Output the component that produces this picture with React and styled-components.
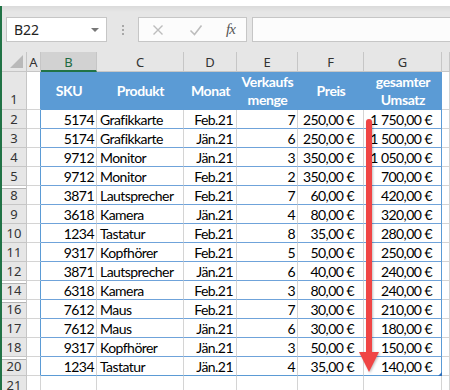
import React from "react"
import styled, { createGlobalStyle } from "styled-components"

const GlobalStyle = createGlobalStyle`
  html, body { margin: 0; padding: 0; background: #fff; }
  body { width: 450px; height: 390px; overflow: hidden; }
`

const Window = styled.div`
  position: relative;
  width: 450px;
  height: 390px;
  overflow: hidden;
  display: flex;
  flex-direction: column;
  background: #fff;
`

const TopGap = styled.div`
  height: 6px;
  flex: none;
  background: #fff;
`

const Frame = styled.div`
  flex: 1;
  min-height: 0;
  display: flex;
  flex-direction: column;
  border-left: 2px solid #217346;
`

const FormulaBar = styled.div`
  height: 46px;
  flex: none;
  box-sizing: border-box;
  padding: 11px 0 0 4px;
  display: flex;
  align-items: flex-start;
  background: linear-gradient(#dadada, #e6e6e6 6px);
`

const NameBox = styled.div`
  width: 101px;
  height: 25px;
  box-sizing: border-box;
  border: 1px solid #c6c6c6;
  background: #fff;
  display: flex;
  align-items: center;
  justify-content: space-between;
  padding: 0 7px 0 7px;
  font: 14px "Noto Sans", sans-serif;
  color: #222;
`

const DropArrow = styled.span`
  width: 0;
  height: 0;
  border-left: 4px solid transparent;
  border-right: 4px solid transparent;
  border-top: 4px solid #777;
`

const Grip = styled.div`
  width: 31px;
  height: 25px;
  display: flex;
  flex-direction: column;
  align-items: center;
  justify-content: center;
  gap: 2px;
  span {
    width: 2px;
    height: 2px;
    background: #a8a8a8;
  }
`

const IconBox = styled.div`
  width: 109px;
  height: 25px;
  box-sizing: border-box;
  border: 1px solid #c6c6c6;
  background: #fcfcfc;
  display: grid;
  grid-template-columns: 38px 38px 1fr;
  align-items: center;
  justify-items: center;
`

const Fx = styled.span`
  font: italic 15px "Liberation Serif", serif;
  color: #555;
  letter-spacing: -1px;
`

const FormulaInput = styled.div`
  flex: 1;
  height: 25px;
  margin-left: 5px;
  box-sizing: border-box;
  border: 1px solid #c6c6c6;
  border-right: none;
  background: #fcfcfc;
`

const Sheet = styled.div`
  flex: 1;
  min-height: 0;
  display: grid;
  grid-template-columns: 25px 14px 56px 87px 53px 61px 66px 78px 1fr;
  grid-template-rows: 20px 38px;
  grid-auto-rows: 19px;
  background: #fff;
  font: 14px "Lato", "Liberation Sans", sans-serif;
  letter-spacing: -0.55px;
  color: #000;
`

const Corner = styled.div`
  position: relative;
  background: #e6e6e6;
  border-right: 1px solid #c6c6c6;
  border-bottom: 1px solid #c6c6c6;
  box-sizing: border-box;
  &::after {
    content: "";
    position: absolute;
    right: 3px;
    bottom: 3px;
    width: 13px;
    height: 13px;
    background: #b9b9b9;
    clip-path: polygon(100% 0, 100% 100%, 0 100%);
  }
`

const ColHead = styled.div`
  box-sizing: border-box;
  display: flex;
  align-items: center;
  justify-content: center;
  background: ${(p) => (p.$active ? "#d2d2d2" : "#e6e6e6")};
  border-right: 1px solid #c6c6c6;
  border-bottom: ${(p) => (p.$active ? "2px solid #217346" : "1px solid #c6c6c6")};
  color: ${(p) => (p.$active ? "#1e6b41" : "#333")};
  font: 13px "Noto Sans", sans-serif;
  letter-spacing: 0;
  padding-top: ${(p) => (p.$active ? "2px" : "0")};
`

const RowHead = styled.div`
  box-sizing: border-box;
  display: flex;
  justify-content: center;
  align-items: ${(p) => (p.$bottom ? "flex-end" : "center")};
  padding-bottom: ${(p) => (p.$bottom ? "1px" : "0")};
  background: #e6e6e6;
  border-right: 1px solid #c6c6c6;
  border-bottom: 1px solid #c6c6c6;
  box-shadow: ${(p) => (p.$gap ? "inset 0 2px 0 #fff, inset 0 3px 0 #b4b4b4" : "none")};
  color: #333;
  font: 13px "Noto Sans", sans-serif;
  letter-spacing: 0;
`

const Cell = styled.div`
  position: relative;
  box-sizing: border-box;
  display: flex;
  align-items: center;
  justify-content: ${(p) => (p.$align === "left" ? "flex-start" : "flex-end")};
  padding: ${(p) => (p.$align === "left" ? "0 0 0 3px" : `0 ${p.$pad || 2}px 0 0`)};
  white-space: nowrap;
  background: #fff;
  border-right: 1px solid ${(p) => (p.$edge ? "#5b9bd5" : "#d4d4d4")};
  border-bottom: 1px solid ${(p) => (p.$band ? "#6fa3da" : "#d4d4d4")};
`

const HeadCell = styled.div`
  box-sizing: border-box;
  display: flex;
  flex-direction: column;
  align-items: center;
  justify-content: center;
  background: #5b9bd5;
  color: #fff;
  font-weight: 700;
  line-height: 18px;
  letter-spacing: -0.4px;
  text-align: center;
  border-bottom: 1px solid #5b9bd5;
`

const Handle = styled.span`
  position: absolute;
  right: -1px;
  bottom: -1px;
  width: 4px;
  height: 4px;
  background: #2e6fba;
  clip-path: polygon(100% 0, 100% 100%, 0 100%);
`

const Arrow = styled.svg`
  position: absolute;
  left: 354px;
  top: 112px;
  filter: drop-shadow(1px 1px 1px rgba(0, 0, 0, 0.25));
`

const columns = ["A", "B", "C", "D", "E", "F", "G", ""]

const headers = [["SKU"], ["Produkt"], ["Monat"], ["Verkaufs", "menge"], ["Preis"], ["gesamter", "Umsatz"]]

const rows = [
  [2, "5174", "Grafikkarte", "Feb.21", "7", "250,00 €", "1 750,00 €"],
  [3, "5174", "Grafikkarte", "Jän.21", "6", "250,00 €", "1 500,00 €"],
  [4, "9712", "Monitor", "Jän.21", "3", "350,00 €", "1 050,00 €"],
  [5, "9712", "Monitor", "Feb.21", "2", "350,00 €", "700,00 €"],
  [8, "3871", "Lautsprecher", "Feb.21", "7", "60,00 €", "420,00 €"],
  [9, "3618", "Kamera", "Jän.21", "4", "80,00 €", "320,00 €"],
  [10, "1234", "Tastatur", "Feb.21", "8", "35,00 €", "280,00 €"],
  [11, "9317", "Kopfhörer", "Feb.21", "5", "50,00 €", "250,00 €"],
  [12, "3871", "Lautsprecher", "Jän.21", "6", "40,00 €", "240,00 €"],
  [14, "6318", "Kamera", "Feb.21", "3", "80,00 €", "240,00 €"],
  [16, "7612", "Maus", "Feb.21", "7", "30,00 €", "210,00 €"],
  [17, "7612", "Maus", "Jän.21", "6", "30,00 €", "180,00 €"],
  [18, "9317", "Kopfhörer", "Jän.21", "3", "50,00 €", "150,00 €"],
  [20, "1234", "Tastatur", "Jän.21", "4", "35,00 €", "140,00 €"],
]

// rows that follow hidden rows get the double line in the row header
const afterHidden = [8, 14, 16, 20]

const pads = [2, null, 3, 2, 9, 9]

export default function App() {
  return (
    <Window>
      <GlobalStyle />
      <TopGap />
      <Frame>
        <FormulaBar>
          <NameBox>
            B22
            <DropArrow />
          </NameBox>
          <Grip>
            <span />
            <span />
            <span />
          </Grip>
          <IconBox>
            <svg width="12" height="12" viewBox="0 0 12 12">
              <path d="M1.5 1.5l9 9M10.5 1.5l-9 9" stroke="#bdbdbd" strokeWidth="1.4" fill="none" />
            </svg>
            <svg width="14" height="12" viewBox="0 0 14 12">
              <path d="M1.5 6.5l4 4 7-9" stroke="#bdbdbd" strokeWidth="1.6" fill="none" />
            </svg>
            <Fx>fx</Fx>
          </IconBox>
          <FormulaInput />
        </FormulaBar>

        <Sheet>
          <Corner />
          {columns.map((c, i) => (
            <ColHead key={i} $active={c === "B"}>
              {c}
            </ColHead>
          ))}

          <RowHead $bottom>1</RowHead>
          <Cell $edge />
          {headers.map((h, i) => (
            <HeadCell key={i}>
              {h.map((line) => (
                <span key={line}>{line}</span>
              ))}
            </HeadCell>
          ))}
          <Cell />

          {rows.map((r, ri) => {
            const last = ri === rows.length - 1
            return (
              <React.Fragment key={r[0]}>
                <RowHead $gap={afterHidden.includes(r[0])}>{r[0]}</RowHead>
                <Cell $edge />
                {r.slice(1).map((v, ci) => (
                  <Cell
                    key={ci}
                    $band
                    $edge={ci === 5}
                    $align={ci === 1 ? "left" : "right"}
                    $pad={pads[ci]}
                    style={last ? { borderBottomColor: "#5b9bd5" } : undefined}
                  >
                    {v}
                    {last && ci === 5 && <Handle />}
                  </Cell>
                ))}
                <Cell />
              </React.Fragment>
            )
          })}

          <RowHead>21</RowHead>
          {columns.map((c, i) => (
            <Cell key={i} />
          ))}
        </Sheet>
      </Frame>

      <Arrow width="30" height="265" viewBox="0 0 30 265">
        <line x1="15" y1="10" x2="15" y2="242" stroke="#f04545" strokeWidth="6" strokeLinecap="round" />
        <polygon points="5,240 25,240 15,260" fill="#f04545" />
      </Arrow>
    </Window>
  )
}
